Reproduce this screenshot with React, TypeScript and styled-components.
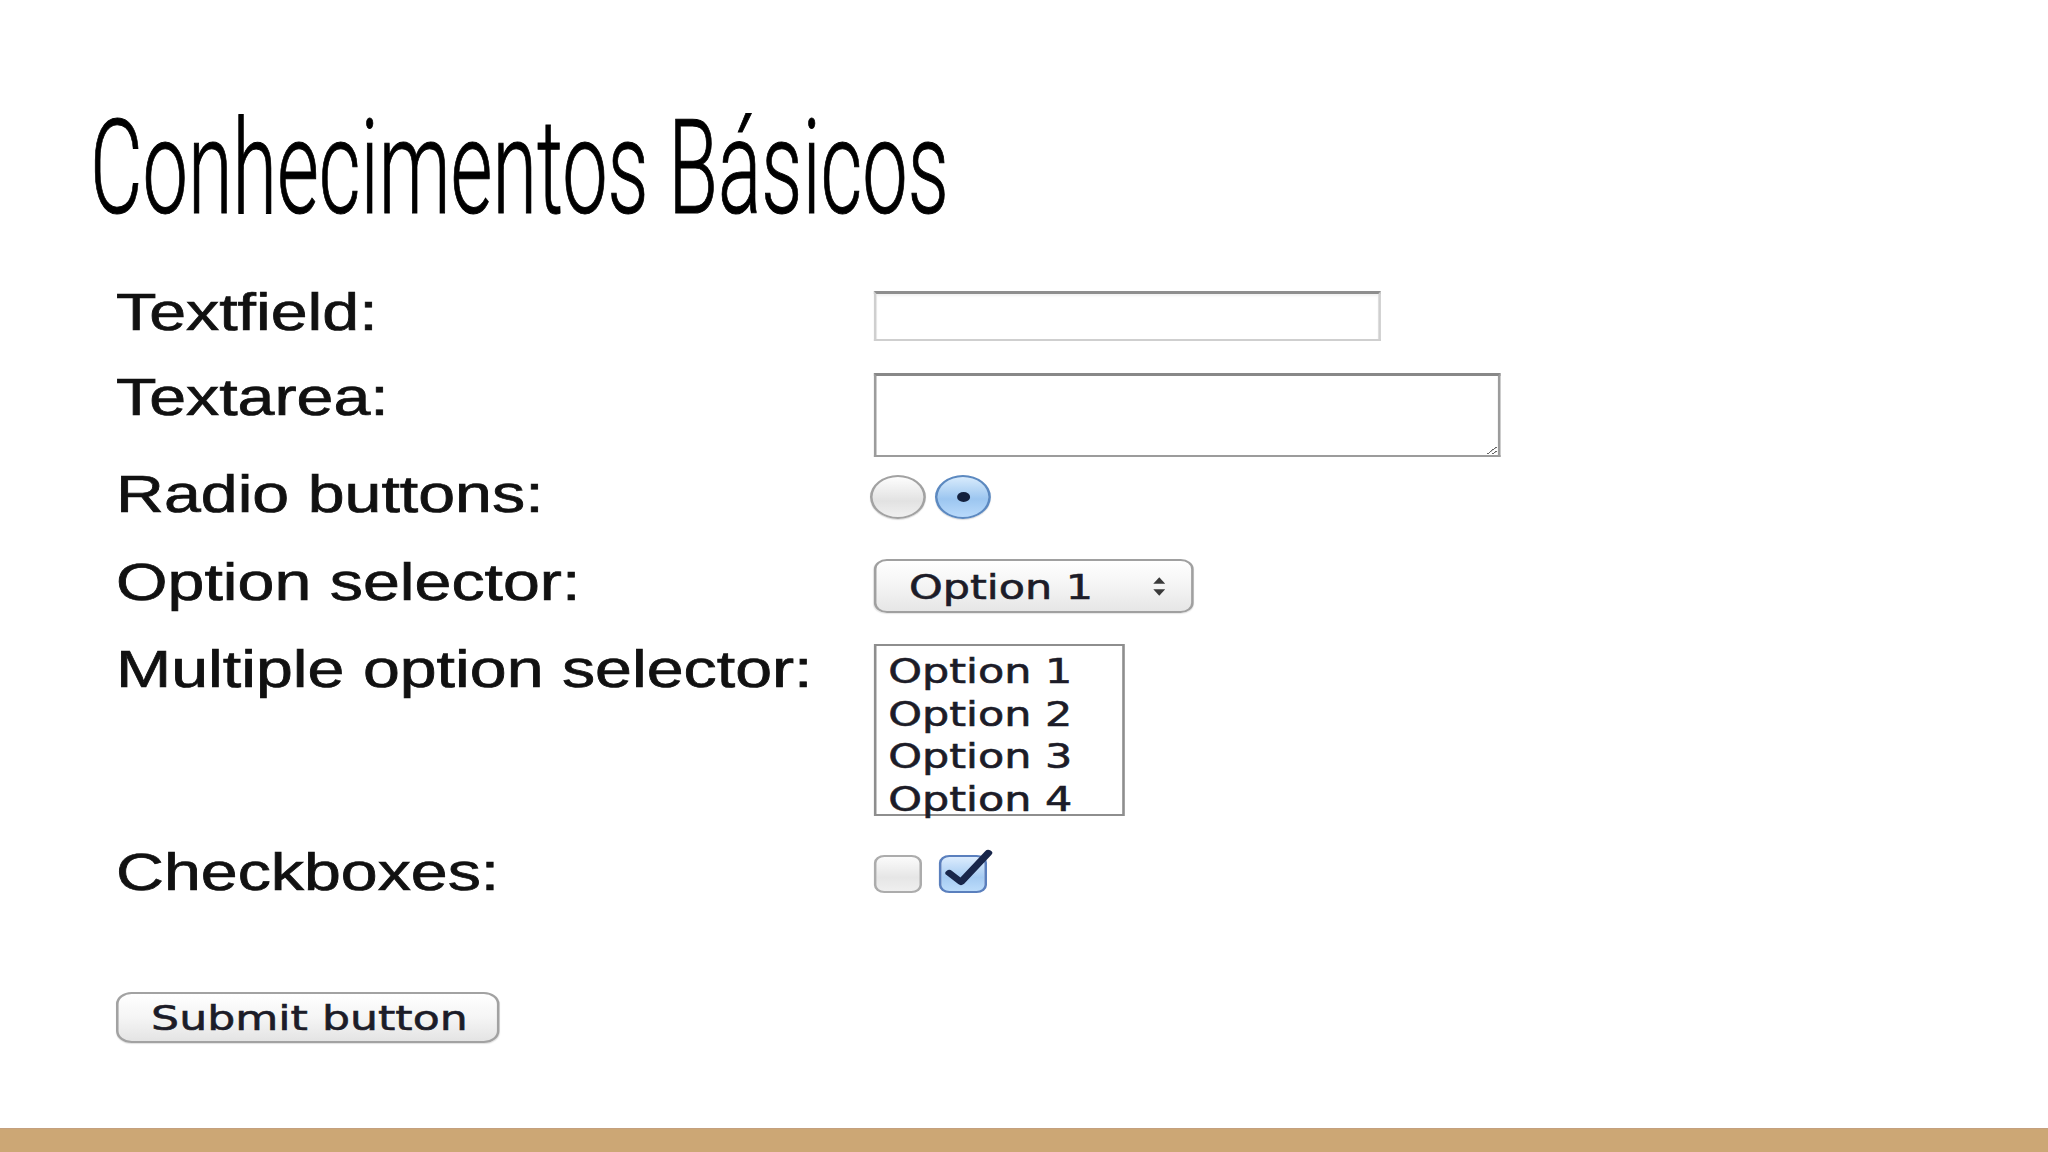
import React, { FC } from 'react'
import styled, { createGlobalStyle } from 'styled-components'

const GlobalStyle = createGlobalStyle`
  html, body {
    margin: 0;
    padding: 0;
    background: #ffffff;
  }
  #root {
    min-height: 100vh;
  }
`

type FieldRow = {
  label: string
  height: number
  top: number
  control: React.ReactNode
}

const App: FC = () => {
  const rows: FieldRow[] = [
    { label: 'Textfield:', height: 85, top: 4, control: <TextField readOnly /> },
    { label: 'Textarea:', height: 97, top: 1, control: <TextArea readOnly /> },
    {
      label: 'Radio buttons:',
      height: 88,
      top: 6,
      control: (
        <Group $gap={7} $shift={-3}>
          <Radio />
          <Radio $checked />
        </Group>
      ),
    },
    {
      label: 'Option selector:',
      height: 87,
      top: 2,
      control: (
        <Select>
          <SelectText>Option 1</SelectText>
          <Arrows viewBox="0 0 12 22">
            <path d="M6 1 L11 8 H1 Z" fill="#3a3a3a" />
            <path d="M6 21 L11 14 H1 Z" fill="#3a3a3a" />
          </Arrows>
        </Select>
      ),
    },
    {
      label: 'Multiple option selector:',
      height: 203,
      top: 0,
      control: (
        <ListBox>
          {['Option 1', 'Option 2', 'Option 3', 'Option 4'].map((o) => (
            <ListOption key={o}>{o}</ListOption>
          ))}
        </ListBox>
      ),
    },
    {
      label: 'Checkboxes:',
      height: 145,
      top: 8,
      control: (
        <Group $gap={13}>
          <Checkbox />
          <Checkbox $checked>
            <Tick viewBox="0 0 40 44">
              <path
                d="M6 24 L15 33 L36 4"
                fill="none"
                stroke="#18264a"
                strokeWidth="6"
                strokeLinecap="round"
                strokeLinejoin="round"
              />
            </Tick>
          </Checkbox>
        </Group>
      ),
    },
  ]

  return (
    <Page>
      <GlobalStyle />
      <Main>
        <Title>
          <TitleText>Conhecimentos Básicos</TitleText>
        </Title>
        <Form>
          {rows.map((r) => (
            <Row key={r.label} $h={r.height}>
              <Label>{r.label}</Label>
              <Cell $top={r.top}>{r.control}</Cell>
            </Row>
          ))}
          <SubmitButton type="button">Submit button</SubmitButton>
        </Form>
      </Main>
      <Footer />
    </Page>
  )
}

export default App

const Page = styled.div`
  display: flex;
  flex-direction: column;
  height: 1152px;
  overflow: hidden;
`
const Main = styled.main`
  flex: 1;
  display: flex;
  flex-direction: column;
  padding: 103px 0 0 0;
`
const Title = styled.h1`
  margin: 0 0 53px 90px;
  height: 131px;
  font-family: Roboto, 'DejaVu Sans', sans-serif;
  font-weight: 300;
  font-size: 131px;
  line-height: 131px;
  color: #000;
  white-space: nowrap;
`
const TitleText = styled.span`
  display: inline-block;
  transform: scaleX(0.618);
  transform-origin: left center;
  -webkit-text-stroke: 1px #000;
`
const Form = styled.form`
  margin-left: 116px;
  width: max-content;
  transform: scaleX(1.3);
  transform-origin: left top;
`
const Row = styled.div<{ $h: number }>`
  display: grid;
  grid-template-columns: 583px auto;
  align-items: start;
  height: ${({ $h }) => $h}px;
`
const Label = styled.div`
  font-family: 'Liberation Sans', Arial, sans-serif;
  font-size: 51px;
  line-height: 51px;
  color: #111;
  white-space: nowrap;
  -webkit-text-stroke: 0.7px #111;
`
const Cell = styled.div<{ $top: number }>`
  padding-top: ${({ $top }) => $top}px;
`
const Group = styled.div<{ $gap: number; $shift?: number }>`
  display: flex;
  align-items: center;
  gap: ${({ $gap }) => $gap}px;
  margin-left: ${({ $shift = 0 }) => $shift}px;
`
const TextField = styled.input`
  box-sizing: border-box;
  display: block;
  width: 390px;
  height: 50px;
  margin: 0;
  border: 2px solid #cfcfcf;
  border-top: 3px solid #8e8e8e;
  background: #fff;
  box-shadow: inset 0 2px 2px rgba(0, 0, 0, 0.06);
  outline: none;
`
const TextArea = styled.textarea`
  box-sizing: border-box;
  display: block;
  width: 482px;
  height: 84px;
  margin: 0;
  border: 2px solid #9c9c9c;
  border-top: 3px solid #888;
  background: #fff;
  resize: both;
  outline: none;
`
const Radio = styled.span<{ $checked?: boolean }>`
  box-sizing: border-box;
  position: relative;
  display: block;
  width: 43px;
  height: 44px;
  border-radius: 50%;
  border: 2px solid ${({ $checked }) => ($checked ? '#5c89c0' : '#a2a2a2')};
  background: ${({ $checked }) =>
    $checked
      ? 'linear-gradient(#d8ebfc, #9cc6f0 55%, #b9dafb)'
      : 'linear-gradient(#fdfdfd, #e2e2e2 60%, #f0f0f0)'};
  box-shadow: 0 1px 1px rgba(0, 0, 0, 0.15);

  &::after {
    content: '';
    display: ${({ $checked }) => ($checked ? 'block' : 'none')};
    position: absolute;
    left: 50%;
    top: 50%;
    width: 10px;
    height: 10px;
    margin: -5px 0 0 -5px;
    border-radius: 50%;
    background: #14213d;
  }
`
const Select = styled.div`
  box-sizing: border-box;
  display: flex;
  align-items: center;
  width: 246px;
  height: 54px;
  padding: 0 0 0 25px;
  border: 2px solid #a0a0a0;
  border-radius: 10px;
  background: linear-gradient(#ffffff, #f4f4f4 50%, #e6e6e6);
  box-shadow: 0 1px 1px rgba(0, 0, 0, 0.1);
`
const SelectText = styled.span`
  flex: 1;
  font-family: 'DejaVu Sans', Verdana, sans-serif;
  font-size: 33px;
  line-height: 1;
  color: #1c1c28;
  padding-top: 2px;
  -webkit-text-stroke: 0.6px #1c1c28;
`
const Arrows = styled.svg`
  width: 11px;
  height: 21px;
  margin-right: 19px;
`
const ListBox = styled.div`
  box-sizing: border-box;
  width: 193px;
  height: 172px;
  padding: 5px 0 0 9px;
  border: 2px solid #8e8e8e;
  background: #fff;
`
const ListOption = styled.div`
  font-family: 'DejaVu Sans', Verdana, sans-serif;
  font-size: 33px;
  line-height: 42.5px;
  color: #1c1c28;
  white-space: nowrap;
  -webkit-text-stroke: 0.6px #1c1c28;
`
const Checkbox = styled.span<{ $checked?: boolean }>`
  box-sizing: border-box;
  position: relative;
  display: block;
  width: 37px;
  height: 38px;
  border-radius: 8px;
  border: 2px solid ${({ $checked }) => ($checked ? '#5a7fbd' : '#acacac')};
  background: ${({ $checked }) =>
    $checked
      ? 'linear-gradient(#dcecfd, #a5cbf2 60%, #bcdcfa)'
      : 'linear-gradient(#fbfbfb, #e6e6e6 60%, #efefef)'};
`
const Tick = styled.svg`
  position: absolute;
  left: 0;
  top: -8px;
  width: 40px;
  height: 44px;
  overflow: visible;
`
const SubmitButton = styled.button`
  box-sizing: border-box;
  display: flex;
  align-items: center;
  width: 295px;
  height: 51px;
  margin: 0;
  padding: 0 0 0 25px;
  border: 2px solid #a2a2a2;
  border-radius: 12px;
  background: linear-gradient(#ffffff, #f5f5f5 50%, #e4e4e4);
  box-shadow: 0 1px 1px rgba(0, 0, 0, 0.12);
  font-family: 'DejaVu Sans', Verdana, sans-serif;
  font-size: 34px;
  line-height: 1;
  color: #1c1c28;
  -webkit-text-stroke: 0.6px #1c1c28;
  cursor: pointer;
`
const Footer = styled.footer`
  height: 23px;
  flex-shrink: 0;
  border-top: 1px solid #c4a07f;
  background: #cca775;
`
